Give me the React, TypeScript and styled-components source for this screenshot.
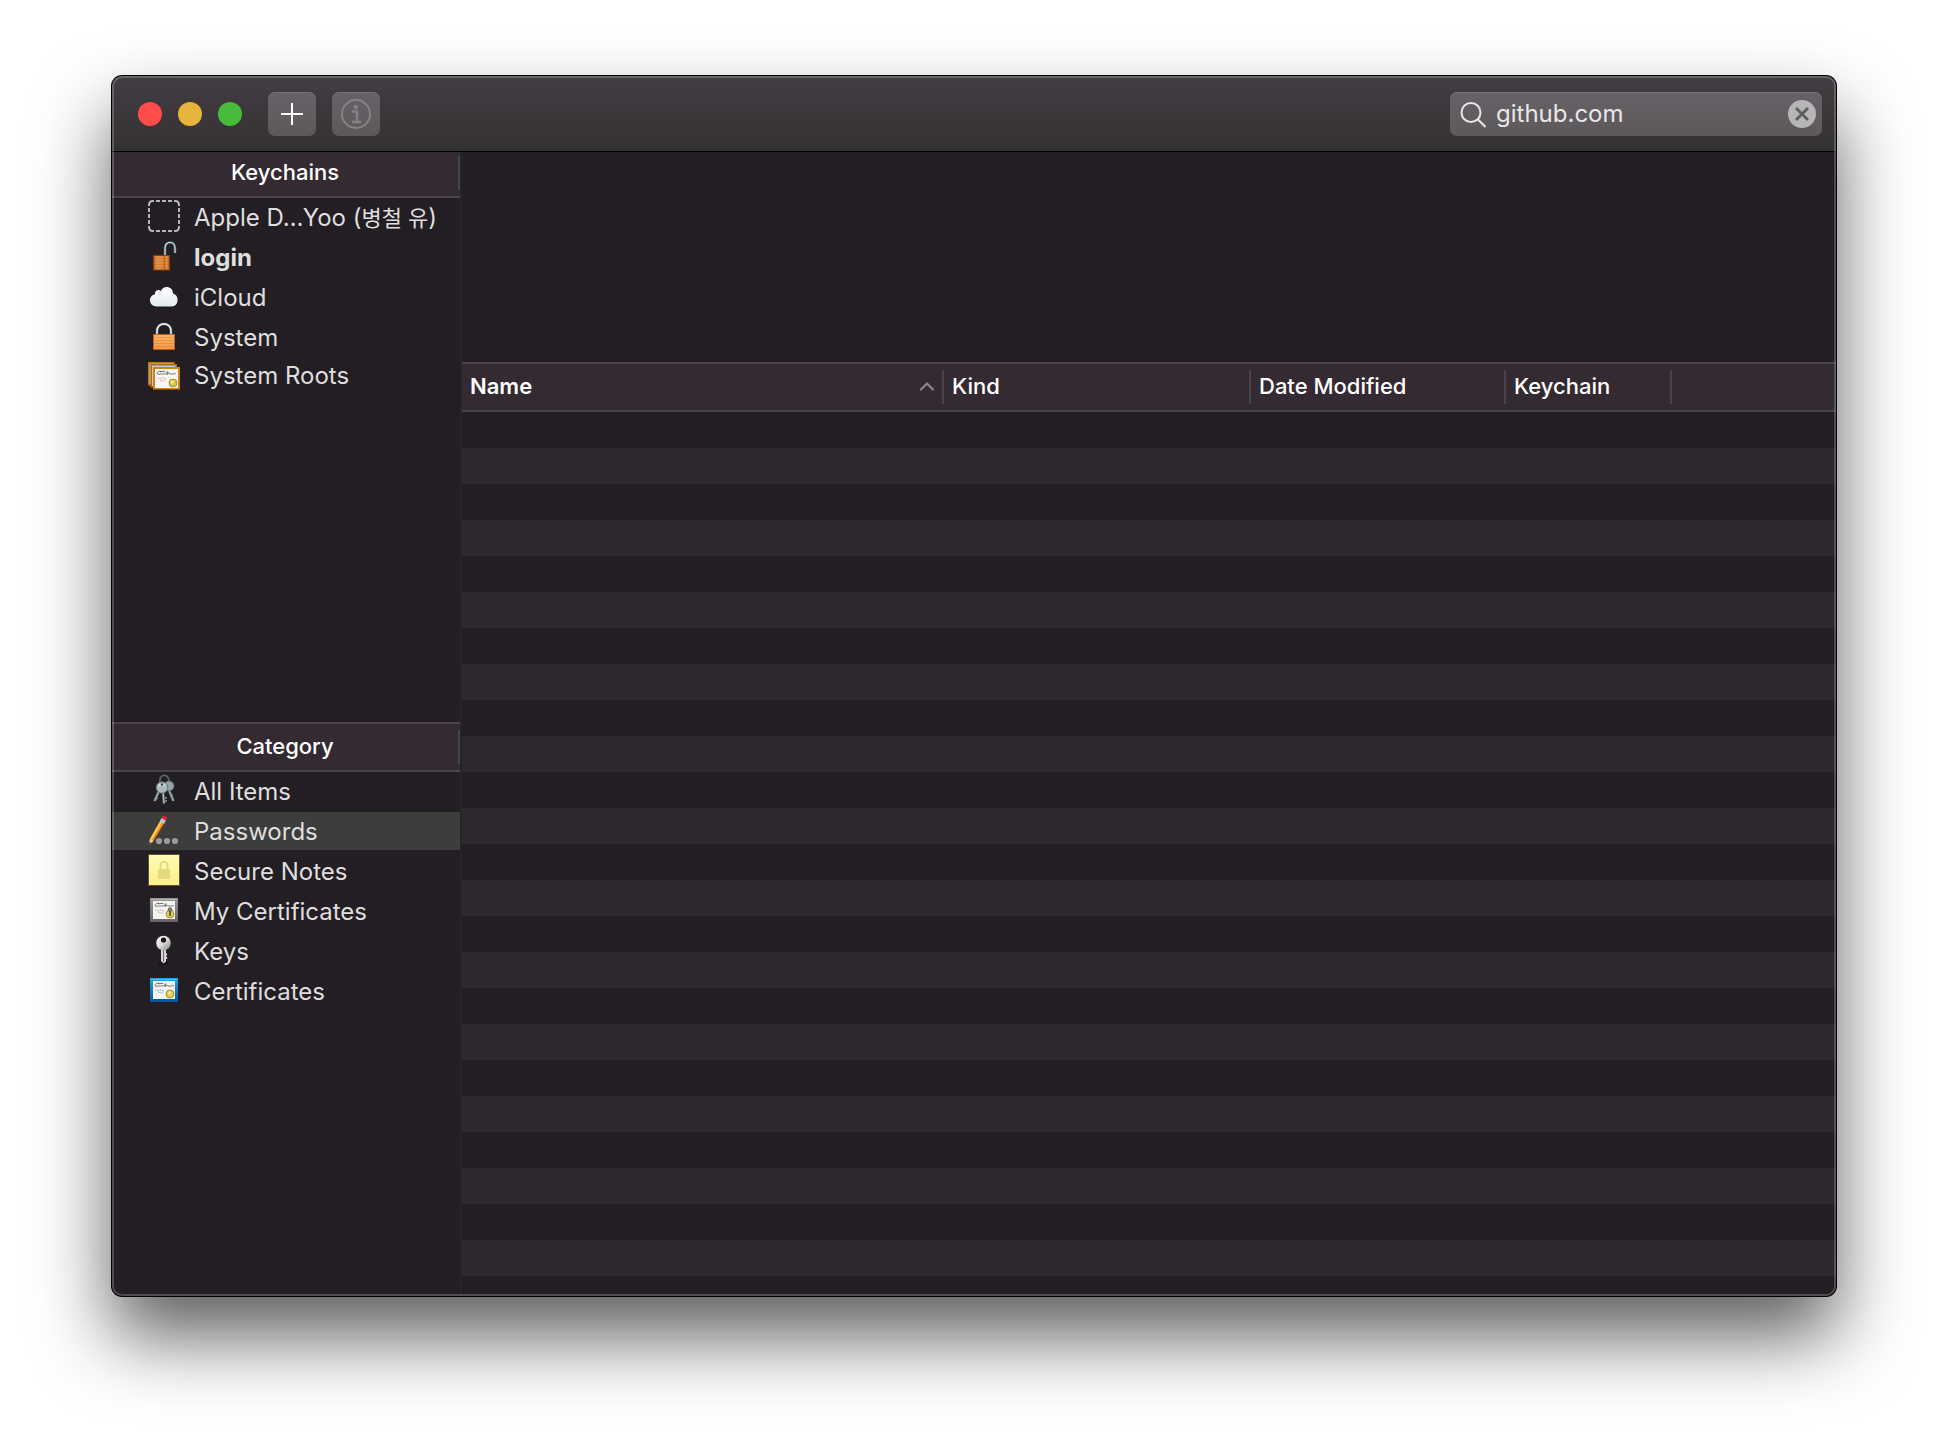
import React, { useState } from "react";
import styled, { createGlobalStyle } from "styled-components";

const font = `Inter, Roboto, "Noto Sans CJK KR", sans-serif`;

const GlobalStyle = createGlobalStyle`
  *, *::before, *::after { box-sizing: border-box; }
  body { margin: 0; background: #fff; font-family: ${font}; }
  button, input { font-family: inherit; margin: 0; padding: 0; border: 0; background: none; color: inherit; }
`;

const Desktop = styled.div`
  display: flex;
  min-height: 100vh;
  padding: 76px 112px 148px;
  overflow: hidden;
`;

const Window = styled.div`
  position: relative;
  display: flex;
  flex-direction: column;
  flex: 1;
  min-width: 0;
  border-radius: 10px;
  background: #231e23;
  color: #dfdedf;
  box-shadow: 0 0 0 1px #000, 0 40px 76px rgba(0, 0, 0, 0.64);

  &::after {
    content: "";
    position: absolute;
    inset: 0;
    border: 2px solid rgba(255, 255, 255, 0.2);
    border-radius: 10px;
    pointer-events: none;
  }
`;

const TitleBar = styled.header`
  display: flex;
  align-items: center;
  padding: 16px 14px 15px 26px;
  border-bottom: 1px solid #000;
  border-radius: 10px 10px 0 0;
  background: linear-gradient(#423d42, #343134);
`;

const TrafficLights = styled.div`
  display: flex;
  gap: 16px;
  margin-right: 26px;
`;

const Light = styled.button<{ $color: string }>`
  width: 24px;
  height: 24px;
  border-radius: 50%;
  background: ${(p) => p.$color};
`;

const Tools = styled.div`
  display: flex;
  gap: 16px;
  margin-right: auto;
`;

const ToolButton = styled.button`
  display: grid;
  place-items: center;
  width: 48px;
  height: 44px;
  border-radius: 7px;
  background: linear-gradient(#666166, #5c595c);
  box-shadow: inset 0 1px 0 rgba(255, 255, 255, 0.12);
  color: #fff;

  &:disabled { color: #858185; }
`;

const SearchField = styled.label`
  display: flex;
  align-items: center;
  width: 372px;
  height: 44px;
  padding: 0 6px 0 10px;
  border-radius: 7px;
  background: linear-gradient(#666166, #5c595c);
  box-shadow: inset 0 1px 0 rgba(255, 255, 255, 0.12);
`;

const SearchInput = styled.input`
  flex: 1;
  min-width: 0;
  height: 32px;
  padding: 0 0 2px 8px;
  outline: none;
  color: #e8e7e8;
  font-size: 24px;
`;

const ClearButton = styled.button`
  display: grid;
  width: 28px;
  height: 28px;
`;

const Content = styled.div`
  display: flex;
  flex: 1;
  min-height: 0;
`;

const Sidebar = styled.aside`
  display: flex;
  flex-direction: column;
  flex: 0 0 350px;
  border-right: 2px solid #242624;
`;

const Pane = styled.section<{ $basis?: number }>`
  flex: ${(p) => (p.$basis ? `0 0 ${p.$basis}px` : "1")};
`;

const PaneHeader = styled.div<{ $first?: boolean }>`
  padding: ${(p) => (p.$first ? "4px 0 6px" : "6px 0")};
  border: solid #4b434a;
  border-width: ${(p) => (p.$first ? "0 0 2px" : "2px 0")};
  background: #342a32;
`;

const PaneTitle = styled.h2`
  height: 34px;
  margin: 0;
  border-right: 2px solid #4b434a;
  color: #fff;
  font-size: 22px;
  font-weight: 500;
  line-height: 32px;
  text-align: center;
`;

const List = styled.ul`
  margin: 0;
  padding: 0;
  list-style: none;
`;

const Item = styled.li<{ $tight?: boolean }>`
  margin-bottom: ${(p) => (p.$tight ? 0 : 2)}px;
`;

const Row = styled.button<{ $selected?: boolean; $bold?: boolean }>`
  display: flex;
  align-items: center;
  gap: 14px;
  width: 100%;
  height: 38px;
  padding: 2px 8px 0 36px;
  background: ${(p) => (p.$selected ? "#3d3d3c" : "transparent")};
  font-size: 24px;
  font-weight: ${(p) => (p.$bold ? 700 : 400)};
  line-height: 36px;
  white-space: nowrap;

  svg { flex: none; margin-bottom: 4px; }
`;

const Hangul = styled.span`
  font-size: 22px;
  line-height: 1;
`;

const Main = styled.main`
  display: flex;
  flex-direction: column;
  flex: 1;
  min-width: 0;
`;

const Summary = styled.div`
  height: 210px;
`;

const Table = styled.table`
  width: 100%;
  border-collapse: collapse;
  table-layout: fixed;
`;

const HeadCell = styled.th<{ $width?: number }>`
  width: ${(p) => (p.$width ? `${p.$width}px` : "auto")};
  padding: 0;
  background: #342a32;
  text-align: left;
`;

const HeadInner = styled.div<{ $divider?: boolean }>`
  padding: 6px 0;
  border: solid #4b434a;
  border-width: 2px 0;

  & > * { border-right: ${(p) => (p.$divider ? "2px solid #4b434a" : "0")}; }
`;

const HeadButton = styled.button`
  display: flex;
  align-items: flex-start;
  justify-content: space-between;
  width: 100%;
  height: 34px;
  padding: 0 7px 0 8px;
  color: #fff;
  font-size: 22px;
  font-weight: 500;
  line-height: 32px;

  svg { margin-top: 11px; }
`;

const SortLabel = styled.span<{ $active?: boolean }>`
  font-weight: ${(p) => (p.$active ? 600 : 500)};
`;

const EmptySpace = styled.div`
  height: 34px;
`;

const Stripes = styled.div`
  flex: 1;
  border-radius: 0 0 10px 0;
  background: repeating-linear-gradient(#231e23 0 36px, #2d292f 36px 72px);
`;

const Icon = ({ children }: { children: React.ReactNode }) => (
  <svg width="32" height="32" viewBox="0 0 32 32" fill="none" aria-hidden="true">
    {children}
  </svg>
);

const PlaceholderIcon = () => (
  <Icon>
    <path
      d="M1 6V5Q1 1 5 1H6M8 1H12M14 1H18M20 1H24M26 1H27Q31 1 31 5V6M31 8V12M31 14V18M31 20V24M31 26V27Q31 31 27 31H26M24 31H20M18 31H14M12 31H8M6 31H5Q1 31 1 27V26M1 24V20M1 18V14M1 12V8"
      stroke="#b9b7b9"
      strokeWidth="2"
    />
  </Icon>
);

const UnlockedIcon = () => (
  <Icon>
    <defs>
      <linearGradient id="brass-open" x1="0" x2="1">
        <stop offset="0" stopColor="#b4611f" />
        <stop offset=".2" stopColor="#e2934a" />
        <stop offset=".6" stopColor="#e08a3a" />
        <stop offset=".68" stopColor="#b9641f" />
        <stop offset=".82" stopColor="#e69a52" />
        <stop offset="1" stopColor="#a65315" />
      </linearGradient>
    </defs>
    <path d="M17 15V8C17 .5 27 .5 27 8V13" stroke="#3a4a55" strokeWidth="3" />
    <path d="M17 15V8C17 .5 27 .5 27 8V13" stroke="#d3dee4" strokeWidth="1.300" />
    <rect x="5.500" y="15.500" width="16" height="14.500" fill="url(#brass-open)" stroke="#8a3e0c" />
    <path d="M6 18.500H21M6 21.500H21M6 24.500H21M6 27.500H21" stroke="#9b4a10" strokeOpacity=".2" />
  </Icon>
);

const CloudIcon = () => (
  <Icon>
    <defs>
      <linearGradient id="cloud" x1="0" x2="0" y1="0" y2="1">
        <stop offset="0" stopColor="#fff" />
        <stop offset="1" stopColor="#e3e9ef" />
      </linearGradient>
    </defs>
    <path d="M8 27.500a6.500 6.500 0 0 1-1-13C7 10 11 9 13 11c2-6 12-5 12 3 7 1 7 13-.5 13.500Z" fill="#121b26" />
    <path d="M8 26.500a6.200 6.200 0 0 1-1-12.300C6.500 10.500 10.500 9 13 11c2-6 12-5 12 2.500 6.500 1.500 6 12.500-.5 13Z" fill="url(#cloud)" />
    <path d="M13 11c-1 1.500-1.300 3-.8 4.500M25 13.500c0 1.500-.5 2.500-1.200 3.500" stroke="#d3dbe3" strokeWidth=".8" />
  </Icon>
);

const LockedIcon = () => (
  <Icon>
    <defs>
      <linearGradient id="brass" x1="0" x2="0" y1="0" y2="1">
        <stop offset="0" stopColor="#ffb566" />
        <stop offset="1" stopColor="#f3974a" />
      </linearGradient>
    </defs>
    <path d="M9 14V11C9 1.500 23 1.500 23 11V14" stroke="#40525d" strokeWidth="3" />
    <path d="M9 14V11C9 1.500 23 1.500 23 11V14" stroke="#e9f0f3" strokeWidth="1.600" />
    <rect x="5.500" y="14.500" width="21" height="15" fill="url(#brass)" stroke="#b7601b" />
    <path d="M6 17.500H26M6 20.500H26M6 23.500H26M6 26.500H26" stroke="#c46c1c" strokeOpacity=".35" />
  </Icon>
);

const Scribble = ({ x, y, ink }: { x: number; y: number; ink: string }) => (
  <g transform={`translate(${x} ${y})`} strokeWidth=".7">
    <path
      d="M5 .5C2 -.5 0 2.500 2 3.200S5 2 5.500 3 7 2 7.500 3 9 1.500 9.500 3 11 0 11.800 .6s-1.800 4.400 0 2.400 1.500 .8 2.500 0 1.500 .8 2.500 0 1.500 .4 3-.4M4 .8L9.500 .2"
      stroke="#3a3a3c"
    />
    <path d="M1.500 7.800q1.500-1.600 2.500-.2t2-.4 2 .2 2-.6M4 10q1.500-1.200 2.500-.2t2.500-.4" stroke={ink} />
  </g>
);

const RootsIcon = () => (
  <Icon>
    <rect x=".75" y="4.750" width="25" height="22" fill="#b9b8b5" stroke="#b87a14" strokeWidth="1.500" />
    <rect x="3.250" y="6.750" width="25" height="22" fill="#c9c8c5" stroke="#b06c12" strokeWidth="1.500" />
    <rect x="6" y="10" width="25" height="21" fill="#f8f7f5" stroke="#cf8414" strokeWidth="2" />
    <path d="M5 31.500H32" stroke="#8e4b08" />
    <Scribble x={8} y={13} ink="#e08c8c" />
    <circle cx="25" cy="25" r="4" fill="#d8c544" stroke="#918326" strokeWidth=".8" />
    <circle cx="24.300" cy="24" r="1.800" fill="#f1e88b" />
  </Icon>
);

const KeyringIcon = () => (
  <Icon>
    <path d="M12 10C10 -1 21 -1 21 7" stroke="#5e6667" strokeWidth="1.800" />
    <path d="M12 15L6.500 27M15 17L16 29.500M20 14L25.500 27" stroke="#454d4f" strokeWidth="3.200" />
    <path d="M12 15L6.500 27M15 17L16 29.500M20 14L25.500 27" stroke="#a9b4b5" strokeWidth="1.600" />
    <path d="M8 24l2 1M17 24h2M17 27h2M23 22l2-1" stroke="#8b9799" strokeWidth="1.300" />
    <circle cx="21" cy="12" r="5" fill="#94a6ab" stroke="#566063" strokeWidth=".8" />
    <circle cx="14" cy="13.500" r="5.800" fill="#abbcc0" stroke="#596366" strokeWidth=".8" />
    <path d="M10.500 12q3-3 6.500-.5" stroke="#dce7e8" strokeWidth="1.500" />
    <circle cx="14" cy="10.500" r="1.200" fill="#3b4346" />
  </Icon>
);

const PencilIcon = () => (
  <Icon>
    <path d="M1 30.500L2 24.500L12.800 5.500L17 8L5.500 27Z" fill="#ed9a1e" />
    <path d="M3.300 25L14 6.200" stroke="#ffd268" strokeWidth="1.600" />
    <path d="M5.500 27L17 8" stroke="#8e4b10" />
    <path d="M1 30.500L2 24.500L5.500 27Z" fill="#eccba8" />
    <path d="M1 30.500L1.400 28L3 29Z" fill="#2b2523" />
    <path d="M11.800 7.200L13.700 4L18 6.500L16 9.800Z" fill="#b8c4d5" />
    <path d="M13.700 4Q15 1 17.500 2.200T18 6.500Z" fill="#e5252a" />
    <g fill="#9b9b9b">
      <circle cx="11" cy="27" r="3.100" />
      <circle cx="19" cy="27" r="3.100" />
      <circle cx="27" cy="27" r="3.100" />
    </g>
  </Icon>
);

const NoteIcon = () => (
  <Icon>
    <defs>
      <linearGradient id="note" x1="0" x2="0" y1="0" y2="1">
        <stop offset="0" stopColor="#fffbb4" />
        <stop offset="1" stopColor="#fdf18a" />
      </linearGradient>
    </defs>
    <rect x=".5" y=".5" width="31" height="31" fill="url(#note)" stroke="#63512b" />
    <rect x="10" y="15" width="12" height="10" rx="1" fill="#e6d97f" />
    <path d="M12.500 15V11.500C12.500 6.500 19.500 6.500 19.500 11.500V15" stroke="#e6d97f" strokeWidth="1.800" />
  </Icon>
);

const CertificateIcon = ({ mine }: { mine?: boolean }) => (
  <Icon>
    <defs>
      <linearGradient id={mine ? "frame-mine" : "frame"} x1="0" x2="0" y1="0" y2="1">
        <stop offset="0" stopColor={mine ? "#999" : "#22a7dc"} />
        <stop offset="1" stopColor={mine ? "#656565" : "#07529c"} />
      </linearGradient>
    </defs>
    <rect x="2" y="4" width="28" height="24" fill={`url(#${mine ? "frame-mine" : "frame"})`} />
    <path d="M3 5.500H29" stroke={mine ? "#bbb" : "#5cc8ee"} strokeWidth=".8" />
    <rect x="5" y="7" width="22" height="18" fill="#f4f4f3" />
    <Scribble x={6} y={9} ink={mine ? "#aaa" : "#5fa6dd"} />
    <circle cx="22" cy="20" r="4" fill="#decb50" stroke="#958420" strokeWidth=".8" />
    {mine ? (
      <>
        <circle cx="22" cy="15.500" r="1.800" fill="#8a8a85" stroke="#4b4b45" strokeWidth=".7" />
        <path d="M22 17V22" stroke="#4b4b45" strokeWidth="1.500" />
      </>
    ) : (
      <circle cx="21.500" cy="19" r="1.800" fill="#f3e98e" />
    )}
  </Icon>
);

const KeyIcon = () => (
  <Icon>
    <defs>
      <linearGradient id="steel" x1="0" x2="1" y1="0" y2="1">
        <stop offset="0" stopColor="#fff" />
        <stop offset=".5" stopColor="#d8d8d8" />
        <stop offset="1" stopColor="#858585" />
      </linearGradient>
    </defs>
    <ellipse cx="15" cy="29" rx="5" ry="1.500" fill="#151215" />
    <path d="M13 14H18V19L19.500 20.500L18 22L19.500 24L18 25.500V27.500L15.500 29.500L13 27Z" fill="#d7d7d7" />
    <path d="M15.500 16V28" stroke="#666" />
    <circle cx="15.500" cy="9" r="7.300" fill="url(#steel)" />
    <circle cx="15.500" cy="6" r="2.600" fill="#171317" />
  </Icon>
);

type Entry = {
  id: string;
  label: React.ReactNode;
  icon: React.ReactNode;
  bold?: boolean;
  tight?: boolean;
};

const keychains: Entry[] = [
  {
    id: "apple",
    label: (
      <span>
        Apple D…Yoo (<Hangul lang="ko">병철 유</Hangul>)
      </span>
    ),
    icon: <PlaceholderIcon />,
  },
  { id: "login", label: "login", icon: <UnlockedIcon />, bold: true },
  { id: "icloud", label: "iCloud", icon: <CloudIcon /> },
  { id: "system", label: "System", icon: <LockedIcon />, tight: true },
  { id: "roots", label: "System Roots", icon: <RootsIcon /> },
];

const categories: Entry[] = [
  { id: "all", label: "All Items", icon: <KeyringIcon /> },
  { id: "passwords", label: "Passwords", icon: <PencilIcon /> },
  { id: "notes", label: "Secure Notes", icon: <NoteIcon /> },
  { id: "mine", label: "My Certificates", icon: <CertificateIcon mine /> },
  { id: "keys", label: "Keys", icon: <KeyIcon /> },
  { id: "certificates", label: "Certificates", icon: <CertificateIcon /> },
];

const columns = [
  { label: "Name", width: 482 },
  { label: "Kind", width: 307 },
  { label: "Date Modified", width: 255 },
  { label: "Keychain", width: 166 },
];

export default function App() {
  const [query, setQuery] = useState("github.com");
  const [category, setCategory] = useState("passwords");

  return (
    <>
      <GlobalStyle />
      <Desktop>
        <Window>
          <TitleBar>
            <TrafficLights>
              <Light $color="#ff4b4a" aria-label="Close" />
              <Light $color="#e8b53c" aria-label="Minimize" />
              <Light $color="#48bb3b" aria-label="Zoom" />
            </TrafficLights>
            <Tools>
              <ToolButton aria-label="Add item">
                <svg width="22" height="22" viewBox="0 0 22 22" stroke="currentColor" strokeWidth="2">
                  <path d="M11 0V22M0 11H22" />
                </svg>
              </ToolButton>
              <ToolButton aria-label="Item info" disabled>
                <svg width="30" height="30" viewBox="0 0 30 30" fill="none" stroke="currentColor">
                  <circle cx="15" cy="15" r="14" strokeWidth="2" />
                  <path d="M11 12.500H16V22.500M11 23H20" strokeWidth="2.600" />
                  <circle cx="15" cy="8" r="2.200" fill="currentColor" stroke="none" />
                </svg>
              </ToolButton>
            </Tools>
            <SearchField>
              <svg width="28" height="28" viewBox="0 0 28 28" fill="none" stroke="#e8e7e8" strokeWidth="2">
                <circle cx="11" cy="12.500" r="9.500" />
                <path d="M17.800 19.300L25.500 27" />
              </svg>
              <SearchInput
                type="text"
                aria-label="Search"
                value={query}
                onChange={(e) => setQuery(e.target.value)}
              />
              <ClearButton type="button" aria-label="Clear search" onClick={() => setQuery("")}>
                <svg width="28" height="28" viewBox="0 0 28 28">
                  <circle cx="14" cy="14" r="14" fill="#b7b5b7" />
                  <path d="M8 8L20 20M20 8L8 20" stroke="#5f5c5f" strokeWidth="2.800" />
                </svg>
              </ClearButton>
            </SearchField>
          </TitleBar>
          <Content>
            <Sidebar>
              <Pane $basis={570}>
                <PaneHeader $first>
                  <PaneTitle>Keychains</PaneTitle>
                </PaneHeader>
                <List>
                  {keychains.map((k) => (
                    <Item key={k.id} $tight={k.tight}>
                      <Row $bold={k.bold}>
                        {k.icon}
                        {k.label}
                      </Row>
                    </Item>
                  ))}
                </List>
              </Pane>
              <Pane>
                <PaneHeader>
                  <PaneTitle>Category</PaneTitle>
                </PaneHeader>
                <List>
                  {categories.map((c) => (
                    <Item key={c.id}>
                      <Row $selected={c.id === category} onClick={() => setCategory(c.id)}>
                        {c.icon}
                        {c.label}
                      </Row>
                    </Item>
                  ))}
                </List>
              </Pane>
            </Sidebar>
            <Main>
              <Summary />
              <Table>
                <thead>
                  <tr>
                    {columns.map((c, i) => (
                      <HeadCell key={c.label} $width={c.width} aria-sort={i === 0 ? "ascending" : undefined}>
                        <HeadInner $divider>
                          <HeadButton>
                            <SortLabel $active={i === 0}>{c.label}</SortLabel>
                            {i === 0 && (
                              <svg width="16" height="10" viewBox="0 0 16 10" fill="none">
                                <path d="M2 8.500L8 2.500L14 8.500" stroke="#8b848a" strokeWidth="2.200" strokeLinecap="round" />
                              </svg>
                            )}
                          </HeadButton>
                        </HeadInner>
                      </HeadCell>
                    ))}
                    <HeadCell as="td">
                      <HeadInner>
                        <EmptySpace />
                      </HeadInner>
                    </HeadCell>
                  </tr>
                </thead>
              </Table>
              <Stripes />
            </Main>
          </Content>
        </Window>
      </Desktop>
    </>
  );
}
